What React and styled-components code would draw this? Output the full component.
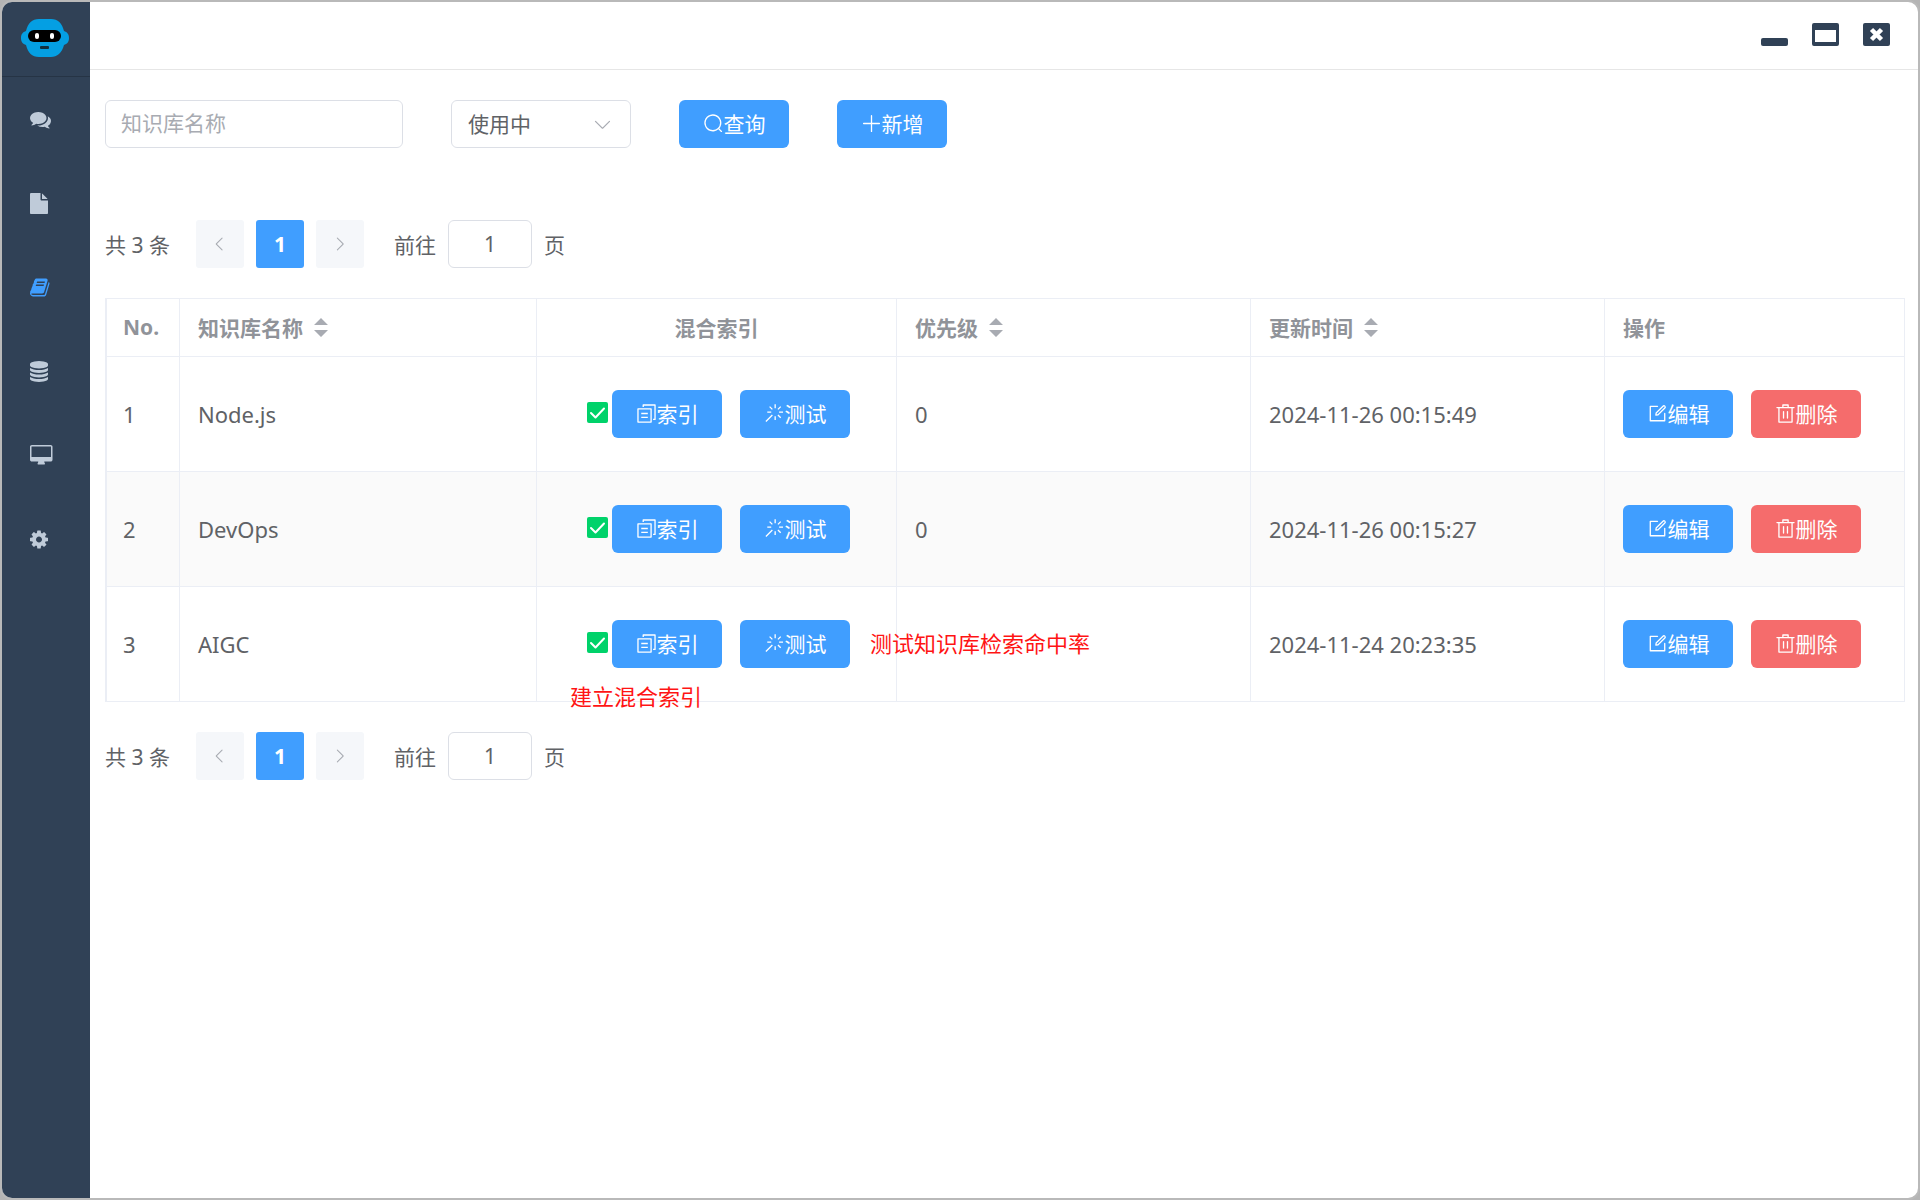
import React, { useState } from "react";
import styled, { createGlobalStyle, css } from "styled-components";

const color = {
  primary: "#409eff",
  danger: "#f56c6c",
  sidebar: "#304156",
  border: "#dcdfe6",
  line: "#ebeef5",
  text: "#606266",
  muted: "#a8abb2",
  heading: "#909399",
};

const GlobalStyle = createGlobalStyle`
  *, *::before, *::after { box-sizing: border-box; }
  body { margin: 0; background: #b4b4b4; }
  body, button, input, select {
    font-family: "Noto Sans", "Noto Sans CJK SC", sans-serif;
    font-size: 21px;
    color: ${color.text};
  }
`;

const Window = styled.div`
  display: flex;
  min-height: 100vh;
  border: 2px solid #b9b9b9;
  border-radius: 12px;
  background: #fff;
  overflow: hidden;
`;

const Sidebar = styled.aside`
  flex: none;
  width: 88px;
  background: ${color.sidebar};
`;

const Brand = styled.div`
  display: flex;
  align-items: center;
  justify-content: center;
  height: 75px;
  padding: 0 2px 2px 0;
  border-bottom: 1px solid #263445;
`;

const Menu = styled.nav`
  display: flex;
  flex-direction: column;
`;

const MenuLink = styled.a`
  display: flex;
  align-items: center;
  height: 84px;
  padding-left: 28px;
  color: ${(p) => (p.$active ? color.primary : "#bfcbd9")};
`;

const MenuIcon = styled.svg`
  height: 21px;
  fill: currentColor;
`;

const Main = styled.div`
  flex: 1;
  min-width: 0;
`;

const TitleBar = styled.header`
  display: flex;
  justify-content: flex-end;
  align-items: center;
  gap: 24px;
  height: 68px;
  padding: 0 28px 2px 0;
  border-bottom: 1px solid #e6e6e6;
`;

const WindowButton = styled.button`
  display: flex;
  padding: 0;
  border: 0;
  background: none;
  color: ${color.sidebar};
  cursor: pointer;
`;

const Content = styled.main`
  padding: 30px 13px 30px 15px;
`;

const Toolbar = styled.form`
  display: flex;
  gap: 48px;
  margin-bottom: 72px;
`;

const field = css`
  height: 48px;
  border: 1px solid ${color.border};
  border-radius: 6px;
  background: #fff;
  outline: 0;
`;

const SearchInput = styled.input`
  ${field}
  width: 298px;
  padding: 0 15px 2px;
  &::placeholder { color: ${color.muted}; opacity: 1; }
`;

const SelectBox = styled.div`
  display: grid;
  align-items: center;
  width: 180px;
  & > * { grid-area: 1 / 1; }
  & > svg {
    justify-self: end;
    margin-right: 18px;
    color: ${color.muted};
    pointer-events: none;
  }
`;

const Select = styled.select`
  ${field}
  width: 100%;
  padding: 0 16px;
  appearance: none;
`;

const Icon = styled.svg`
  flex: none;
  width: ${(p) => p.$size || 21}px;
  height: ${(p) => p.$size || 21}px;
  fill: currentColor;
`;

const Button = styled.button`
  display: inline-flex;
  align-items: center;
  justify-content: center;
  width: 110px;
  height: 48px;
  padding: 0 0 2px;
  border: 0;
  border-radius: 6px;
  background: ${(p) => (p.$danger ? color.danger : color.primary)};
  color: #fff;
  white-space: nowrap;
  cursor: pointer;
`;

const Pager = styled.nav`
  display: flex;
  align-items: center;
  gap: 12px;
  height: 48px;
`;

const Total = styled.span`
  margin-right: 14px;
`;

const PageButton = styled.button`
  display: flex;
  align-items: center;
  justify-content: center;
  width: 48px;
  height: 48px;
  padding: 0;
  border: 0;
  border-radius: 3px;
  background: ${(p) => (p.$current ? color.primary : "#f5f7fa")};
  color: ${(p) => (p.$current ? "#fff" : color.muted)};
  font-weight: 700;
`;

const Jump = styled.label`
  display: flex;
  align-items: center;
  gap: 12px;
  margin-left: 18px;
`;

const JumpInput = styled.input`
  ${field}
  width: 84px;
  text-align: center;
`;

const TableFrame = styled.div`
  margin: 30px 0;
  border-top: 1px solid ${color.line};
  border-left: 2px solid ${color.line};
`;

const Table = styled.table`
  width: 100%;
  table-layout: fixed;
  border-collapse: separate;
  border-spacing: 0;
`;

const Col = styled.col`
  width: ${(p) => (p.$width ? `${p.$width}px` : "auto")};
`;

const cell = css`
  padding: 0 18px;
  border-right: 1px solid ${color.line};
  border-bottom: 1px solid ${color.line};
  text-align: ${(p) => (p.$center ? "center" : "left")};
  &:first-child { padding-left: 16px; padding-right: 0; }
`;

const Th = styled.th`
  ${cell}
  height: 58px;
  padding-bottom: 2px;
  color: ${color.heading};
  font-weight: 700;
`;

const Td = styled.td`
  ${cell}
  height: 115px;
  font-size: 22px;
`;

const Row = styled.tr`
  &:nth-child(even) { background: #fafafa; }
`;

const SortButton = styled.button`
  display: inline-flex;
  align-items: center;
  gap: 11px;
  padding: 0;
  border: 0;
  background: none;
  color: inherit;
  font-weight: inherit;
`;

const Actions = styled.div`
  display: flex;
  gap: 18px;
  font-size: 21px;
`;

const IndexActions = styled(Actions)`
  position: relative;
  justify-content: center;
  padding-left: 4px;
`;

const IndexState = styled.div`
  display: flex;
  align-items: center;
  gap: 4px;
`;

const Check = styled.svg`
  width: 21px;
  height: 21px;
  margin-bottom: 3px;
`;

const Note = styled.span`
  position: absolute;
  color: #ff1414;
  font-size: 22px;
  line-height: 32px;
  white-space: nowrap;
`;

const TestNote = styled(Note)`
  left: 315px;
  top: 7px;
`;

const IndexNote = styled(Note)`
  left: 15px;
  top: 60px;
`;

const paths = {
  search:
    "m795.904 750.72 124.992 124.928a32 32 0 0 1-45.248 45.248L750.656 795.904a416 416 0 1 1 45.248-45.248zM480 832a352 352 0 1 0 0-704 352 352 0 0 0 0 704z",
  plus: "M480 480V128a32 32 0 0 1 64 0v352h352a32 32 0 1 1 0 64H544v352a32 32 0 1 1-64 0V544H128a32 32 0 0 1 0-64h352z",
  edit: "M832 512a32 32 0 1 1 64 0v352a32 32 0 0 1-32 32H160a32 32 0 0 1-32-32V160a32 32 0 0 1 32-32h352a32 32 0 0 1 0 64H192v640h640V512z m-362.048 42.24 52.8-7.552L847.104 222.4a32 32 0 1 0-45.248-45.248L477.44 501.44l-7.552 52.8zm422.4-422.4a96 96 0 0 1 0 135.808l-331.84 331.84a32 32 0 0 1-18.112 9.088L436.8 623.68a32 32 0 0 1-36.224-36.224l15.104-105.6a32 32 0 0 1 9.024-18.112l331.904-331.84a96 96 0 0 1 135.744 0z",
  remove:
    "M160 256H96a32 32 0 0 1 0-64h256V95.936a32 32 0 0 1 32-32h256a32 32 0 0 1 32 32V192h256a32 32 0 1 1 0 64h-64v672a32 32 0 0 1-32 32H192a32 32 0 0 1-32-32V256zm448-64v-64H416v64h192zM224 896h576V256H224v640zm192-128a32 32 0 0 1-32-32V416a32 32 0 0 1 64 0v320a32 32 0 0 1-32 32zm192 0a32 32 0 0 1-32-32V416a32 32 0 0 1 64 0v320a32 32 0 0 1-32 32z",
  copy: "M128 320v576h576V320H128zm-32-64h640a32 32 0 0 1 32 32v640a32 32 0 0 1-32 32H96a32 32 0 0 1-32-32V288a32 32 0 0 1 32-32zM960 96v704a32 32 0 0 1-32 32h-96v-64h64V128H384v64h-64V96a32 32 0 0 1 32-32h576a32 32 0 0 1 32 32zM256 672h320v64H256v-64zm0-192h320v64H256v-64z",
  magic:
    "M512 64h64v192h-64V64zm0 576h64v192h-64V640zM160 480v-64h192v64H160zm576 0v-64h192v64H736zM249.856 199.04l45.248-45.184L430.848 289.6 385.6 334.848 249.856 199.104zM657.152 606.4l45.248-45.248 135.744 135.744-45.248 45.248L657.152 606.4zM114.048 923.2 68.8 877.952l316.8-316.8 45.248 45.248-316.8 316.8zM702.4 334.848 657.152 289.6l135.744-135.744 45.248 45.248L702.4 334.848z",
  down: "M831.872 340.864 512 652.672 192.128 340.864a30.592 30.592 0 0 0-42.752 0 29.12 29.12 0 0 0 0 41.6L489.664 714.24a32 32 0 0 0 44.672 0l340.288-331.712a29.12 29.12 0 0 0 0-41.728 30.592 30.592 0 0 0-42.752 0z",
  left: "M609.408 149.376 277.76 489.6a32 32 0 0 0 0 44.672l331.648 340.352a29.12 29.12 0 0 0 41.728 0 30.592 30.592 0 0 0 0-42.752L339.264 511.936l311.872-319.872a30.592 30.592 0 0 0 0-42.688 29.12 29.12 0 0 0-41.728 0z",
  right:
    "M340.864 149.312a30.592 30.592 0 0 0 0 42.752L652.736 512 340.864 831.872a30.592 30.592 0 0 0 0 42.752 29.12 29.12 0 0 0 41.728 0L714.24 534.336a32 32 0 0 0 0-44.672L382.592 149.376a29.12 29.12 0 0 0-41.728 0z",
};

const menu = [
  {
    label: "对话",
    box: "0 0 1792 1792",
    d: "M1408 768q0 139-94 257t-256.5 186.5-353.5 68.5q-86 0-176-16-124 88-278 128-36 9-86 16h-3q-11 0-20.5-8t-11.5-21q-1-3-1-6.5t.5-6.5 2-6l2.5-5 3.5-5.5 4-5 4.5-5 4-4.5q5-6 23-25t26-29.5 22.5-29 25-38.5 20.5-44q-124-72-195-177t-71-224q0-139 94-257t256.5-186.5 353.5-68.5 353.5 68.5 256.5 186.5 94 257zm384 256q0 120-71 224.5t-195 176.5q10 24 20.5 44t25 38.5 22.5 29 26 29.5 23 25q1 1 4 4.5t4.5 5 4 5 3.5 5.5l2.5 5 2 6 .5 6.5-1 6.5q-3 14-13 22t-22 7q-50-7-86-16-154-40-278-128-90 16-176 16-271 0-472-132 58 4 88 4 161 0 309-45t264-129q125-92 192-212t67-254q0-77-23-152 129 71 204 178t75 230z",
  },
  {
    label: "文档",
    box: "128 0 1536 1792",
    d: "M1152 512v-472q22 14 36 28l408 408q14 14 28 36h-472zm-128 32q0 40 28 68t68 28h544v1056q0 40-28 68t-68 28h-1344q-40 0-68-28t-28-68v-1600q0-40 28-68t68-28h800v544z",
  },
  {
    label: "知识库",
    box: "64 0 1664 1792",
    active: true,
    d: "M1703 478q40 57 18 129l-275 906q-19 64-76.5 107.5t-122.5 43.5h-923q-77 0-148.5-53.5t-99.5-131.5q-24-67-2-127 0-4 3-27t4-37q1-8-3-21.5t-3-19.5q2-11 8-21t16.5-23.5 16.5-23.5q23-38 45-91.5t30-91.5q3-10 .5-30t-.5-28q3-11 17-28t17-23q21-36 42-92t25-90q1-9-2.5-32t.5-28q4-13 22-30.5t22-22.5q19-26 42.5-84.5t27.5-96.5q1-8-3-25.5t-2-26.5q2-8 9-18t18-23 17-21q8-12 16.5-30.5t15-35 16-36 19.5-32 26.5-23.5 36-11.5 47.5 5.5l-1 3q38-9 51-9h761q74 0 114 56t18 130l-274 906q-36 119-71.5 153.5t-128.5 34.5h-869q-27 0-38 15-11 16-1 43 24 70 144 70h923q29 0 56-15.5t35-41.5l300-987q7-22 5-57 38 15 59 43zm-1064 2q-4 13 2 22.5t20 9.5h608q13 0 25.5-9.5t16.5-22.5l21-64q4-13-2-22.5t-20-9.5h-608q-13 0-25.5 9.5t-16.5 22.5zm-83 256q-4 13 2 22.5t20 9.5h608q13 0 25.5-9.5t16.5-22.5l21-64q4-13-2-22.5t-20-9.5h-608q-13 0-25.5 9.5t-16.5 22.5z",
  },
  {
    label: "数据",
    box: "128 0 1536 1792",
    d: "M896 768q237 0 443-43t325-127v170q0 69-103 128t-280 93.5-385 34.5-385-34.5-280-93.5-103-128v-170q119 84 325 127t443 43zm0 768q237 0 443-43t325-127v170q0 69-103 128t-280 93.5-385 34.5-385-34.5-280-93.5-103-128v-170q119 84 325 127t443 43zm0-384q237 0 443-43t325-127v170q0 69-103 128t-280 93.5-385 34.5-385-34.5-280-93.5-103-128v-170q119 84 325 127t443 43zm0-1152q208 0 385 34.5t280 93.5 103 128v128q0 69-103 128t-280 93.5-385 34.5-385-34.5-280-93.5-103-128v-128q0-69 103-128t280-93.5 385-34.5z",
  },
  {
    label: "终端",
    box: "-64 0 1920 1792",
    d: "M1728 992v-832q0-13-9.5-22.5t-22.5-9.5h-1600q-13 0-22.5 9.5t-9.5 22.5v832q0 13 9.5 22.5t22.5 9.5h1600q13 0 22.5-9.5t9.5-22.5zm128-832v1088q0 66-47 113t-113 47h-544q0 37 16 77.5t32 71 16 43.5q0 26-19 45t-45 19h-512q-26 0-45-19t-19-45q0-14 16-44t32-70 16-78h-544q-66 0-113-47t-47-113v-1088q0-66 47-113t113-47h1600q66 0 113 47t47 113z",
  },
  {
    label: "设置",
    box: "128 0 1536 1792",
    d: "M1152 896q0-106-75-181t-181-75-181 75-75 181 75 181 181 75 181-75 75-181zm512-109v222q0 12-8 23t-20 13l-185 28q-19 54-39 91 35 50 107 138 10 12 10 25t-9 23q-27 37-99 108t-94 71q-12 0-26-9l-138-108q-44 23-91 38-16 136-29 186-7 28-36 28h-222q-14 0-24.5-8.5t-11.5-21.5l-28-184q-49-16-90-37l-141 107q-10 9-25 9-14 0-25-11-126-114-165-168-7-10-7-23 0-12 8-23 15-21 51-66.5t54-70.5q-27-50-41-99l-183-27q-13-2-21-12.5t-8-23.5v-222q0-12 8-23t19-13l186-28q14-46 39-92-40-57-107-138-10-12-10-24 0-10 9-23 26-36 98.5-107.5t94.5-71.5q13 0 26 10l138 107q44-23 91-38 16-136 29-186 7-28 36-28h222q14 0 24.5 8.5t11.5 21.5l28 184q49 16 90 37l142-107q9-9 24-9 13 0 25 10 129 119 165 170 7 8 7 22 0 12-8 23-15 21-51 66.5t-54 70.5q26 50 41 98l183 28q13 2 21 12.5t8 23.5z",
  },
];

const rows = [
  { id: 1, name: "Node.js", priority: 0, updated: "2024-11-26 00:15:49" },
  { id: 2, name: "DevOps", priority: 0, updated: "2024-11-26 00:15:27" },
  { id: 3, name: "AIGC", priority: "", updated: "2024-11-24 20:23:35", notes: true },
];

function Glyph({ name, size }) {
  return (
    <Icon viewBox="0 0 1024 1024" $size={size} aria-hidden="true">
      <path d={paths[name]} />
    </Icon>
  );
}

function Logo() {
  return (
    <svg width="48" height="38" viewBox="0 0 48 38" role="img" aria-label="Logo">
      <path
        fill="#049fe3"
        d="M18 0h12c7 0 11 4 13 12 3 1 5 3 5 7s-2 6-5 7c-2 8-7 12-13 12H18C11 38 7 34 5 26c-3-1-5-3-5-7s2-6 5-7C7 4 11 0 18 0z"
      />
      <rect x="7" y="11" width="33" height="12" rx="6" fill="#000" />
      <rect x="14" y="14" width="4" height="6" rx="2" fill="#fff" />
      <rect x="29" y="14" width="4" height="6" rx="2" fill="#fff" />
      <rect x="19" y="27" width="9" height="3" rx="1" fill="#12303f" />
    </svg>
  );
}

function SortHeader({ children }) {
  return (
    <SortButton type="button">
      {children}
      <svg width="14" height="20" viewBox="0 0 14 20" fill={color.muted} aria-hidden="true">
        <path d="M0 8 7 1l7 7zM0 13h14l-7 7z" />
      </svg>
    </SortButton>
  );
}

function Pagination() {
  const [page, setPage] = useState("1");
  return (
    <Pager aria-label="分页">
      <Total>共 3 条</Total>
      <PageButton type="button" aria-label="上一页" disabled>
        <Glyph name="left" size={18} />
      </PageButton>
      <PageButton type="button" $current aria-current="page">
        1
      </PageButton>
      <PageButton type="button" aria-label="下一页" disabled>
        <Glyph name="right" size={18} />
      </PageButton>
      <Jump>
        前往
        <JumpInput value={page} onChange={(e) => setPage(e.target.value)} />
        页
      </Jump>
    </Pager>
  );
}

function CheckMark() {
  return (
    <Check viewBox="0 0 21 21" role="img" aria-label="已建立">
      <rect width="21" height="21" rx="2" fill="#00d26a" />
      <path
        d="M4 11l4.500 4.500L17 6.500"
        fill="none"
        stroke="#fff"
        strokeWidth="2"
        strokeLinecap="round"
        strokeLinejoin="round"
      />
    </Check>
  );
}

export default function App() {
  return (
    <>
      <GlobalStyle />
      <Window>
        <Sidebar>
          <Brand>
            <Logo />
          </Brand>
          <Menu>
            {menu.map((m) => (
              <MenuLink key={m.label} href="#" aria-label={m.label} $active={m.active}>
                <MenuIcon viewBox={m.box} aria-hidden="true">
                  <path d={m.d} />
                </MenuIcon>
              </MenuLink>
            ))}
          </Menu>
        </Sidebar>
        <Main>
          <TitleBar>
            <WindowButton type="button" aria-label="最小化">
              <svg width="27" height="23" viewBox="0 0 27 23" fill="currentColor">
                <rect y="15" width="27" height="8" rx="2" />
              </svg>
            </WindowButton>
            <WindowButton type="button" aria-label="最大化">
              <svg width="27" height="23" viewBox="0 0 27 23" fill="currentColor" fillRule="evenodd">
                <path d="M2 0h23a2 2 0 0 1 2 2v19a2 2 0 0 1-2 2H2a2 2 0 0 1-2-2V2a2 2 0 0 1 2-2zM3 7v12h21V7z" />
              </svg>
            </WindowButton>
            <WindowButton type="button" aria-label="关闭">
              <svg width="27" height="23" viewBox="0 0 27 23">
                <rect width="27" height="23" rx="2" fill="currentColor" />
                <path d="M8.500 6.500l10 10M18.500 6.500l-10 10" stroke="#fff" strokeWidth="4.500" />
              </svg>
            </WindowButton>
          </TitleBar>
          <Content>
            <Toolbar onSubmit={(e) => e.preventDefault()}>
              <SearchInput placeholder="知识库名称" aria-label="知识库名称" />
              <SelectBox>
                <Select aria-label="状态" defaultValue="使用中">
                  <option>使用中</option>
                </Select>
                <Glyph name="down" />
              </SelectBox>
              <Button type="submit">
                <Glyph name="search" />
                查询
              </Button>
              <Button type="button">
                <Glyph name="plus" />
                新增
              </Button>
            </Toolbar>
            <Pagination />
            <TableFrame>
              <Table>
                <colgroup>
                  <Col $width={73} />
                  <Col $width={357} />
                  <Col $width={360} />
                  <Col />
                  <Col />
                  <Col $width={300} />
                </colgroup>
                <thead>
                  <tr>
                    <Th>No.</Th>
                    <Th>
                      <SortHeader>知识库名称</SortHeader>
                    </Th>
                    <Th $center>混合索引</Th>
                    <Th>
                      <SortHeader>优先级</SortHeader>
                    </Th>
                    <Th>
                      <SortHeader>更新时间</SortHeader>
                    </Th>
                    <Th>操作</Th>
                  </tr>
                </thead>
                <tbody>
                  {rows.map((r) => (
                    <Row key={r.id}>
                      <Td>{r.id}</Td>
                      <Td>{r.name}</Td>
                      <Td>
                        <IndexActions>
                          <IndexState>
                            <CheckMark />
                            <Button type="button">
                              <Glyph name="copy" />
                              索引
                            </Button>
                          </IndexState>
                          <Button type="button">
                            <Glyph name="magic" />
                            测试
                          </Button>
                          {r.notes && (
                            <>
                              <TestNote>测试知识库检索命中率</TestNote>
                              <IndexNote>建立混合索引</IndexNote>
                            </>
                          )}
                        </IndexActions>
                      </Td>
                      <Td>{r.priority}</Td>
                      <Td>{r.updated}</Td>
                      <Td>
                        <Actions>
                          <Button type="button">
                            <Glyph name="edit" />
                            编辑
                          </Button>
                          <Button type="button" $danger>
                            <Glyph name="remove" />
                            删除
                          </Button>
                        </Actions>
                      </Td>
                    </Row>
                  ))}
                </tbody>
              </Table>
            </TableFrame>
            <Pagination />
          </Content>
        </Main>
      </Window>
    </>
  );
}
